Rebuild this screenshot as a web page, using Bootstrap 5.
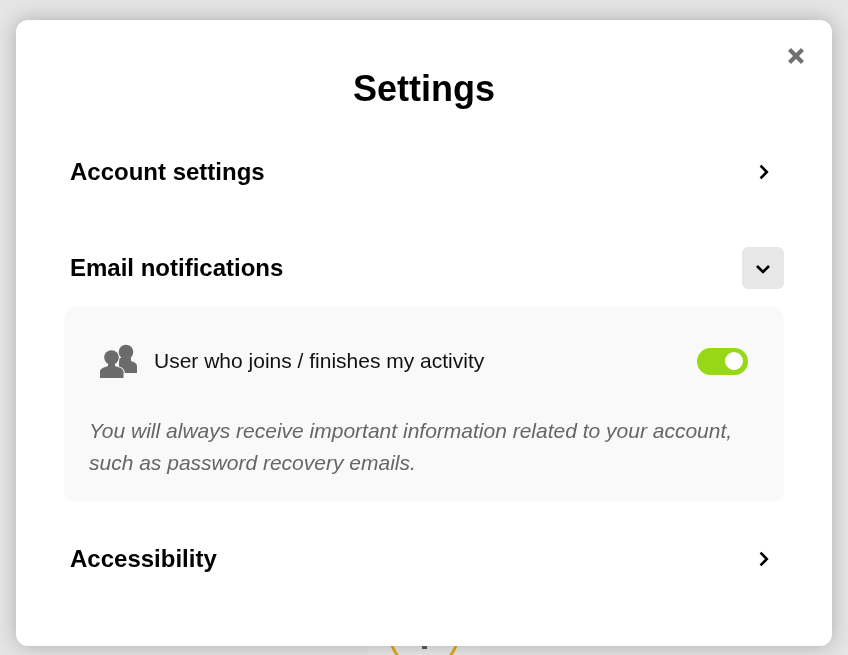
<!DOCTYPE html>
<html lang="en">
<head>
  <meta charset="UTF-8">
  <meta name="viewport" content="width=device-width, initial-scale=1">
  <title>Settings</title>
  <link href="https://cdn.jsdelivr.net/npm/bootstrap@5.3.3/dist/css/bootstrap.min.css" rel="stylesheet">
  <style>
    html, body {
      height: 100%;
      overflow: hidden;
    }
    body {
      background: #e5e5e5;
      font-family: "Liberation Sans", Arial, sans-serif;
      padding: 20px 16px 9px;
    }
    .behind-layer {
      position: fixed;
      inset: 0;
      overflow: hidden;
    }
    .behind-blob {
      position: absolute;
      left: 368px;
      top: 594px;
      width: 112px;
      height: 112px;
      border-radius: 50%;
      background: #e9e9e9;
    }
    .behind-ring {
      position: absolute;
      left: 389px;
      top: 600px;
      width: 70px;
      height: 70px;
      border: 3px solid #e5a823;
      border-radius: 50%;
    }
    .behind-dot {
      position: absolute;
      left: 422px;
      top: 646px;
      width: 5px;
      height: 3px;
      background: #5c5c5c;
    }
    .settings-panel {
      position: relative;
      height: 626px;
      background: #fff;
      border-radius: 12px;
      box-shadow: 0 0 20px rgba(0, 0, 0, .25);
      padding: 45px 48px 0;
    }
    .close-x {
      position: absolute;
      top: 27px;
      right: 27px;
      width: 18px;
      height: 18px;
      padding: 0;
      border: 0;
      background: none;
      display: flex;
    }
    .panel-title {
      font-size: 36px;
      line-height: 48px;
      font-weight: 700;
      color: #000;
      margin: 0 0 38px;
    }
    .section-row {
      height: 42px;
      padding-left: 6px;
    }
    .section-name {
      font-size: 24px;
      font-weight: 700;
      color: #000;
      line-height: 42px;
    }
    .chev-box {
      width: 42px;
      height: 42px;
      border-radius: 6px;
    }
    .chev-box.is-open {
      background: #e7e7e7;
    }
    .notif-box {
      background: #f9f9f9;
      border-radius: 12px;
      height: 195px;
      margin-top: 18px;
      margin-bottom: 36px;
      padding: 34px 36px 0 24px;
    }
    .notif-row {
      height: 40px;
      color: #111;
      font-size: 21px;
    }
    .notif-icon {
      margin: 0 16px 0 12px;
    }
    .switch-on {
      width: 51px;
      height: 27px;
      border-radius: 14px;
      background: #97d816;
      position: relative;
    }
    .switch-on::after {
      content: "";
      position: absolute;
      right: 5px;
      top: 4.500px;
      width: 18px;
      height: 18px;
      border-radius: 50%;
      background: #fff;
    }
    .notif-note {
      font-size: 21px;
      font-style: italic;
      line-height: 32px;
      color: #666;
      margin: 34px 0 0 1px;
    }
    .gap-after {
      margin-bottom: 54px;
    }
  </style>
</head>
<body>
  <div class="behind-layer">
    <div class="behind-blob"></div>
    <div class="behind-ring"></div>
    <div class="behind-dot"></div>
  </div>

  <div class="settings-panel">
    <button type="button" class="close-x" aria-label="Close">
      <svg width="18" height="18" viewBox="0 0 18 18"><path d="M2.500 2.500l13 13M15.500 2.500l-13 13" stroke="#707070" stroke-width="4.200" fill="none"/></svg>
    </button>

    <h1 class="panel-title text-center">Settings</h1>

    <div class="section-row d-flex align-items-center justify-content-between gap-after">
      <span class="section-name">Account settings</span>
      <span class="chev-box d-flex align-items-center justify-content-center">
        <svg width="14" height="16" viewBox="0 0 14 16"><path d="M4.500 1.700l6.300 6.300-6.300 6.300" stroke="#000" stroke-width="2.600" fill="none"/></svg>
      </span>
    </div>

    <div class="section-row d-flex align-items-center justify-content-between">
      <span class="section-name">Email notifications</span>
      <span class="chev-box is-open d-flex align-items-center justify-content-center">
        <svg width="16" height="14" viewBox="0 0 16 14"><path d="M2 5l6 6 6-6" stroke="#000" stroke-width="2.600" fill="none"/></svg>
      </span>
    </div>

    <div class="notif-box">
      <div class="notif-row d-flex align-items-center">
        <svg class="notif-icon" width="38" height="34" viewBox="0 0 38 34">
          <circle cx="26" cy="8" r="7.300" fill="#6b6b6b"/>
          <path fill="#6b6b6b" d="M21 14h10v3c3 1 6 2.500 6 5v7H19V14z"/>
          <circle cx="11.500" cy="13.500" r="7.300" fill="#6b6b6b" stroke="#f9f9f9" stroke-width="2"/>
          <path fill="#f9f9f9" stroke="#f9f9f9" stroke-width="2" d="M8 19h7v3c4 1.300 8.500 2.500 8.500 5.500V34H0v-6.500c0-3 4.500-4.200 8-5.500z"/>
          <circle cx="11.500" cy="13.500" r="7.300" fill="#6b6b6b"/>
          <path fill="#6b6b6b" d="M8 19h7v3c4 1.300 8.500 2.500 8.500 5.500V34H0v-6.500c0-3 4.500-4.200 8-5.500z"/>
        </svg>
        <span class="flex-grow-1">User who joins / finishes my activity</span>
        <span class="switch-on"></span>
      </div>
      <p class="notif-note">You will always receive important information related to your account, such as password recovery emails.</p>
    </div>

    <div class="section-row d-flex align-items-center justify-content-between">
      <span class="section-name">Accessibility</span>
      <span class="chev-box d-flex align-items-center justify-content-center">
        <svg width="14" height="16" viewBox="0 0 14 16"><path d="M4.500 1.700l6.300 6.300-6.300 6.300" stroke="#000" stroke-width="2.600" fill="none"/></svg>
      </span>
    </div>
  </div>
</body>
</html>
